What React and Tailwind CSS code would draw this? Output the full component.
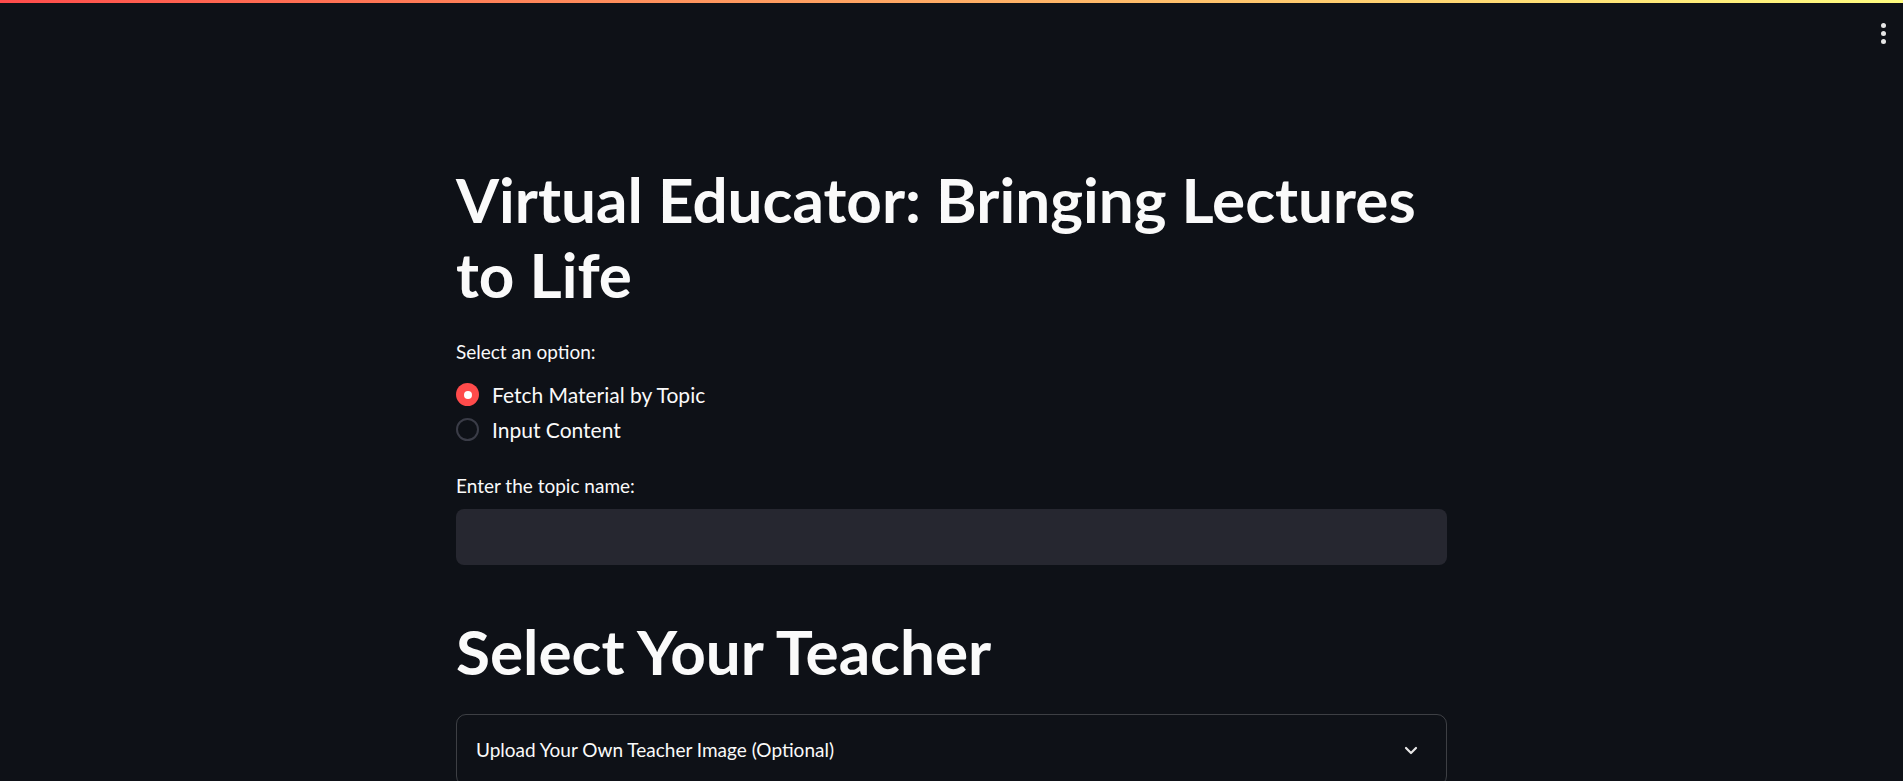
import React from 'react'

const font = { fontFamily: 'Lato, "Open Sans", sans-serif' }

function Radio({ checked, label }) {
  return (
    <div className="flex h-[35px] items-center">
      {checked ? (
        <span className="flex h-[23px] w-[23px] items-center justify-center rounded-full bg-[#ff4b4b]">
          <span className="h-[8px] w-[8px] rounded-full bg-white" />
        </span>
      ) : (
        <span className="h-[23px] w-[23px] rounded-full border-2 border-[#3a3c47] bg-[#0e1117]" />
      )}
      <span className="ml-[13px] text-[21px] leading-[35px] text-[#fafafa]">{label}</span>
    </div>
  )
}

export default function App() {
  return (
    <div className="relative h-[781px] w-full overflow-hidden bg-[#0e1117] text-[#fafafa]" style={font}>
      <div className="h-[3px] w-full bg-gradient-to-r from-[#ff4b4b] to-[#fffd80]" />

      {/* main menu */}
      <div className="absolute right-[17px] top-[23px] flex flex-col items-center gap-[3px]">
        <span className="h-[5px] w-[5px] rounded-full bg-[#e6e6e6]" />
        <span className="h-[5px] w-[5px] rounded-full bg-[#e6e6e6]" />
        <span className="h-[5px] w-[5px] rounded-full bg-[#e6e6e6]" />
      </div>

      <div className="mx-auto w-[991px] pt-[159px]">
        <h1 className="text-[62px] font-bold leading-[75px]">
          Virtual Educator: Bringing Lectures
          <br />
          to Life
        </h1>

        <div className="mt-[28px] text-[19px] leading-[24px]">Select an option:</div>
        <div className="mt-[13px]">
          <Radio checked label="Fetch Material by Topic" />
          <Radio label="Input Content" />
        </div>

        <div className="mt-[27px] text-[19px] leading-[24px]">Enter the topic name:</div>
        <div className="mt-[11px] h-[56px] w-full rounded-[8px] bg-[#262730]" />

        <h2 className="mt-[49px] text-[62px] font-bold leading-[75px]">Select Your Teacher</h2>

        <div className="mt-[25px] rounded-[10px] border border-[#fafafa33]">
          <div className="flex h-[70px] items-center justify-between pl-[19px] pr-[28px]">
            <span className="text-[19px] leading-[24px]">Upload Your Own Teacher Image (Optional)</span>
            <svg width="14" height="9" viewBox="0 0 14 9" fill="none">
              <path d="M2 2l5 5 5-5" stroke="#e6e6e6" strokeWidth="2.2" strokeLinecap="round" strokeLinejoin="round" />
            </svg>
          </div>
        </div>
      </div>
    </div>
  )
}
